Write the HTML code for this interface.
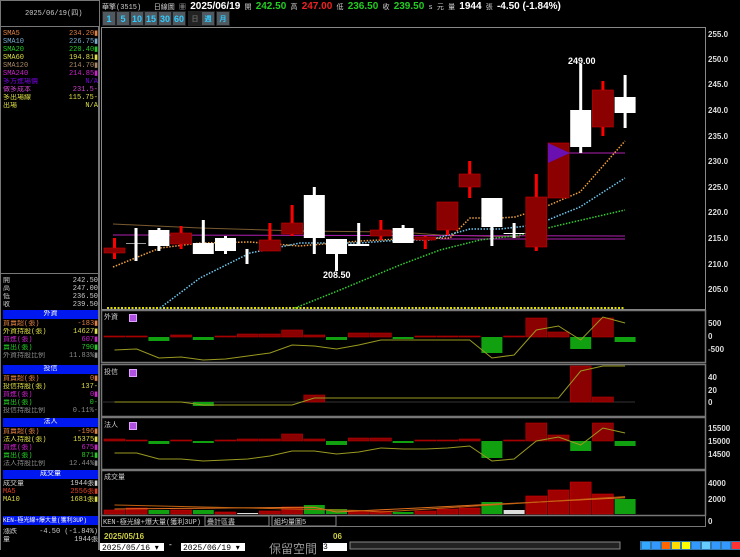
<!DOCTYPE html>
<html><head><meta charset="utf-8"><style>
*{margin:0;padding:0;box-sizing:border-box}
body{width:740px;height:550px;background:#000;overflow:hidden;position:relative;font-family:"Liberation Mono","Noto Sans CJK TC",monospace;font-size:8px;color:#ccc}
.a{position:absolute;white-space:nowrap}
.row{position:absolute;left:3px;width:95px;height:8px;line-height:8px;font-size:7px;overflow:hidden}
.row span{position:absolute;right:0}
.hd{position:absolute;left:3px;width:95px;height:9px;background:#0018f0;color:#fff;text-align:center;font-size:7px;line-height:9px;overflow:hidden}
.btn{position:absolute;top:11px;height:15px;width:14px;background:#505860;color:#3cf;font:bold 9px "Liberation Sans",sans-serif;text-align:center;line-height:15px;border:1px solid #222}
.ax{position:absolute;left:708px;color:#ddd;font:bold 8px "Liberation Sans",sans-serif}
.ic{position:absolute;left:129px;width:8px;height:8px;background:#b050e0;border:1px solid #e0a0ff}
</style></head><body>
<div class="a" style="left:0;top:0;width:100px;height:27px;border:1px solid #777"></div>
<div class="a" style="left:25px;top:8px;color:#ccc;font-size:7px">2025/06/19(四)</div>
<div class="a" style="left:0;top:27px;width:100px;height:523px;border-left:1px solid #777;border-right:2px solid #777"></div>
<div class="row" style="top:30px;color:#e08040">SMA5<span>234.20▮</span></div>
<div class="row" style="top:38px;color:#7ac">SMA10<span>226.75▮</span></div>
<div class="row" style="top:46px;color:#2c2">SMA20<span>220.40▮</span></div>
<div class="row" style="top:54px;color:#dd4">SMA60<span>194.81▮</span></div>
<div class="row" style="top:62px;color:#a86">SMA120<span>214.70▮</span></div>
<div class="row" style="top:70px;color:#c2c">SMA240<span>214.85▮</span></div>
<div class="row" style="top:78px;color:#70d">多方進場價<span>N/A</span></div>
<div class="row" style="top:86px;color:#c4c">做多成本<span>231.5-</span></div>
<div class="row" style="top:94px;color:#dd4">多出場線<span>115.75-</span></div>
<div class="row" style="top:102px;color:#dd4">出場<span>N/A</span></div>
<div class="a" style="left:1px;top:273px;width:98px;height:1px;background:#777"></div>
<div class="row" style="top:277px">開<span>242.50</span></div>
<div class="row" style="top:285px">高<span>247.00</span></div>
<div class="row" style="top:293px">低<span>236.50</span></div>
<div class="row" style="top:301px">收<span>239.50</span></div>
<div class="hd" style="top:310px">外資</div>
<div class="row" style="top:320px;color:#e08040">買賣超(張)<span>-183▮</span></div>
<div class="row" style="top:328px;color:#dd4">外資持股(張)<span>14627▮</span></div>
<div class="row" style="top:336px;color:#c2c">買進(張)<span>607▮</span></div>
<div class="row" style="top:344px;color:#2c2">賣出(張)<span>790▮</span></div>
<div class="row" style="top:352px;color:#888">外資持股比例<span>11.83%▮</span></div>
<div class="hd" style="top:365px">投信</div>
<div class="row" style="top:375px;color:#e08040">買賣超(張)<span>0▮</span></div>
<div class="row" style="top:383px;color:#dd4">投信持股(張)<span>137-</span></div>
<div class="row" style="top:391px;color:#c2c">買進(張)<span>0▮</span></div>
<div class="row" style="top:399px;color:#2c2">賣出(張)<span>0-</span></div>
<div class="row" style="top:407px;color:#888">投信持股比例<span>0.11%-</span></div>
<div class="hd" style="top:418px">法人</div>
<div class="row" style="top:428px;color:#e08040">買賣超(張)<span>-196▮</span></div>
<div class="row" style="top:436px;color:#dd4">法人持股(張)<span>15375▮</span></div>
<div class="row" style="top:444px;color:#c2c">買進(張)<span>675▮</span></div>
<div class="row" style="top:452px;color:#2c2">賣出(張)<span>871▮</span></div>
<div class="row" style="top:460px;color:#888">法人持股比例<span>12.44%▮</span></div>
<div class="hd" style="top:470px">成交量</div>
<div class="row" style="top:480px;color:#ccc">成交量<span>1944張▮</span></div>
<div class="row" style="top:488px;color:#e04020">MA5<span>2556張▮</span></div>
<div class="row" style="top:496px;color:#dd4">MA10<span>1681張▮</span></div>
<div class="hd" style="top:516px;text-align:left;font-size:6px">KEN-極光線+爆大量(獲利3UP)</div>
<div class="row" style="top:528px">漲跌<span>-4.50 (-1.84%)</span></div>
<div class="row" style="top:536px">量<span>1944張</span></div>

<div class="a" style="left:102px;top:1px;font-size:7px;color:#ccc">華擎(3515) &nbsp; 日線圖 ▦ <b style="font:bold 10px 'Liberation Sans';color:#fff">2025/06/19</b> 開 <b style="font:bold 10px 'Liberation Sans';color:#2c2">242.50</b> 高 <b style="font:bold 10px 'Liberation Sans';color:#e22">247.00</b> 低 <b style="font:bold 10px 'Liberation Sans';color:#2c2">236.50</b> 收 <b style="font:bold 10px 'Liberation Sans';color:#2c2">239.50</b> s 元 量 <b style="font:bold 10px 'Liberation Sans';color:#fff">1944</b> 張 <b style="font:bold 10px 'Liberation Sans';color:#fff">-4.50 (-1.84%)</b></div>
<div class="btn" style="left:102px">1</div><div class="btn" style="left:116px">5</div><div class="btn" style="left:130px">10</div><div class="btn" style="left:144px">15</div><div class="btn" style="left:158px">30</div><div class="btn" style="left:172px">60</div><div class="btn" style="left:188px;background:#222;color:#666;font-size:7px">日</div><div class="btn" style="left:201px;font-size:7px">週</div><div class="btn" style="left:216px;font-size:7px">月</div>

<svg class="a" style="left:0;top:0" width="740" height="550" id="s"></svg>

<div class="ax" style="top:30px">255.0</div><div class="ax" style="top:55px">250.0</div><div class="ax" style="top:80px">245.0</div><div class="ax" style="top:106px">240.0</div><div class="ax" style="top:132px">235.0</div><div class="ax" style="top:157px">230.0</div><div class="ax" style="top:183px">225.0</div><div class="ax" style="top:208px">220.0</div><div class="ax" style="top:234px">215.0</div><div class="ax" style="top:260px">210.0</div><div class="ax" style="top:285px">205.0</div>
<div class="ax" style="top:319px">500</div><div class="ax" style="top:332px">0</div><div class="ax" style="top:345px">-500</div>
<div class="ax" style="top:373px">40</div><div class="ax" style="top:386px">20</div><div class="ax" style="top:398px">0</div>
<div class="ax" style="top:424px">15500</div><div class="ax" style="top:437px">15000</div><div class="ax" style="top:450px">14500</div>
<div class="ax" style="top:479px">4000</div><div class="ax" style="top:495px">2000</div><div class="ax" style="top:517px">0</div>
<div class="a" style="left:568px;top:56px;color:#fff;font:bold 9px 'Liberation Sans'">249.00</div>
<div class="a" style="left:323px;top:270px;color:#fff;font:bold 9px 'Liberation Sans'">208.50</div>
<div class="a" style="left:104px;top:312px;font-size:7px">外資</div>
<div class="a" style="left:104px;top:367px;font-size:7px">投信</div>
<div class="a" style="left:104px;top:420px;font-size:7px">法人</div>
<div class="a" style="left:104px;top:472px;font-size:7px">成交量</div>
<div class="ic" style="top:314px"></div><div class="ic" style="top:369px"></div><div class="ic" style="top:422px"></div>
<div class="a" style="left:103px;top:517px;font-size:7px">KEN-極光線+爆大量(獲利3UP)</div>
<div class="a" style="left:207px;top:517px;font-size:7px">疊計區盡</div>
<div class="a" style="left:274px;top:517px;font-size:7px">組均量圖5</div>
<div class="a" style="left:104px;top:532px;color:#cc4;font:bold 8px 'Liberation Sans'">2025/05/16</div>
<div class="a" style="left:333px;top:532px;color:#cc4;font:bold 8px 'Liberation Sans'">06</div>
<div class="a" style="left:100px;top:543px;width:64px;height:8px;background:#fff;color:#000;font-size:8px;padding-left:2px">2025/05/16 ▾</div>
<div class="a" style="left:168px;top:541px;color:#fff">-</div>
<div class="a" style="left:181px;top:543px;width:64px;height:8px;background:#fff;color:#000;font-size:8px;padding-left:2px">2025/06/19 ▾</div>
<div class="a" style="left:269px;top:540px;color:#999;font-size:12px">保留空間</div>
<div class="a" style="left:323px;top:543px;width:24px;height:8px;background:#fff;color:#000">3</div>
<script>
var s=document.getElementById('s'),h='';
function R(x,y,w,hh,f,st){h+='<rect x="'+x+'" y="'+y+'" width="'+w+'" height="'+hh+'" fill="'+f+'"'+(st?' stroke="'+st+'" stroke-width="0.6"':'')+'/>';}
function L(p,c,w,d){h+='<polyline points="'+p+'" fill="none" stroke="'+c+'" stroke-width="'+(w||1)+'"'+(d?' stroke-dasharray="'+d+'"':'')+'/>';}
h+='<rect x="101.5" y="27.5" width="604" height="282" fill="none" stroke="#888"/>';
[[310,362],[364,416],[417,469],[470,515]].forEach(function(a){h+='<rect x="101.5" y="'+a[0]+'.5" width="604" height="'+(a[1]-a[0])+'" fill="none" stroke="#777" stroke-width="1.5"/>';});
h+='<rect x="101.5" y="515.5" width="604" height="11" fill="none" stroke="#777"/>';
h+='<rect x="205" y="516" width="64" height="10" fill="none" stroke="#888"/><rect x="272" y="516" width="64" height="10" fill="none" stroke="#888"/>';
h+='<rect x="100" y="540" width="640" height="10" fill="#000"/><rect x="640" y="541" width="100" height="9" fill="#37a"/><rect x="350" y="542" width="270" height="7" fill="#222" stroke="#888"/>';
for(var i=0;i<10;i++)R(642+i*10,542,8,7,['#3af','#39f','#f60','#fd0','#ff0','#39f','#6cf','#39f','#39f','#f33'][i]);
var cx=function(i){return 114.5+22.2*i;};
var C=[[0,248,253,238,259,'r'],[2,230,246,228,251,'w'],[3,233,244,226,249,'r'],[4,243,254,220,254,'w'],[5,238,251,236,254,'w'],[7,240,251,223,251,'r'],[8,223,234,205,236,'r'],[9,195,238,187,254,'w'],[10,239,254,239,271,'w'],[11,244,246,223,246,'w'],[12,230,236,220,240,'r'],[13,228,243,225,243,'w'],[14,237,240,236,249,'r'],[15,202,230,202,235,'r'],[16,174,187,161,198,'r'],[17,198,227,198,246,'w'],[18,233,234,223,238,'w'],[19,197,247,174,251,'r'],[20,143,198,143,198,'r'],[21,110,147,64,153,'w'],[22,90,127,81,136,'r'],[23,97,113,75,128,'w']];
L('113,224 200,228 300,231 400,232 440,235 520,237','#7a5a30',1);
L('113,235 625,236','#b020b0',1);L('440,239 625,239','#b020b0',1);
L('548,153 625,153','#b020b0',1);
L('107,308 625,308','#dd0',2,'2,1.5');
L('113,267 160,248 200,243 250,242 300,246 360,241 400,239 450,238 470,218 500,218 515,217 540,209 580,192 625,141','#f0a040',1.5,'1.5,1.5');
L('160,308 200,278 250,253 300,243 360,243 400,240 430,240 470,229 500,229 536,225 560,215 580,207 625,178','#70c8f0',1.5,'1.5,1.5');
L('295,308 340,290 400,265 440,250 480,240 520,235 560,225 625,210','#30d030',1.5,'1.5,1.5');
R(126,243,20,1,'#999');h+='<line x1="136" y1="228" x2="136" y2="261" stroke="#fff" stroke-width="3"/>';
h+='<line x1="247" y1="249" x2="247" y2="264" stroke="#fff" stroke-width="3"/>';
C.forEach(function(c){var x=cx(c[0]);var w=c[5]=='r';h+='<line x1="'+x+'" y1="'+c[3]+'" x2="'+x+'" y2="'+c[4]+'" stroke="'+(w?'#f00':'#fff')+'" stroke-width="3"/>';R(x-10.5,c[1],21,Math.max(1,c[2]-c[1]),w?'#8b0000':'#fff',w?'#c00':null);});
h+='<polygon points="548,143 570,153 548,163" fill="#6a10b0"/>';
function panel(z,bars,line,lc){bars.forEach(function(b,i){if(b===null)return;var x=cx(i)-10.5;if(b<0)R(x,z,21,Math.max(1,-b),'#10a010');else R(x,z-Math.max(1,b),21,Math.max(1,b),'#8b0000','#b00');});var p=line.map(function(v,i){return cx(i)+','+v;}).join(' ');L(p,lc||'#9a9a20',1);}
panel(337,[1,1,-4,2,-3,1,3,3,7,2,-3,4,4,-2,1,1,1,-16,0,19,5,-12,19,-5],[350,349,358,357,360,359,356,353,345,346,349,345,340,340,340,340,340,358,355,330,326,340,317,323]);
h+='<line x1="103" y1="402" x2="635" y2="402" stroke="#333"/>';
panel(402,[null,null,null,null,-4,null,null,null,null,7,null,null,null,null,null,null,null,null,null,null,null,36,5,null],[402,402,402,402,405,405,405,405,405,398,398,398,398,398,398,398,398,398,398,398,398,371,366,366]);
panel(441,[2,1,-3,1,-2,1,2,2,7,2,-4,3,3,-2,1,1,2,-17,0,18,6,-10,18,-5],[453,453,459,459,461,460,459,456,451,451,454,452,448,449,449,448,446,461,459,441,437,445,428,433]);
var V=[4,6,4,4,4,2,1,3,7,9,5,3,3,2,3,5,6,12,4,18,24,32,20,15];
V.forEach(function(v,i){var x=cx(i)-10.5;var g=(i==2||i==4||i==10||i==13||i==17||i==23||i==9);var wt=(i==6||i==18);R(x,514-v,21,v,wt?'#ddd':(g?'#10a010':'#a00000'),g||wt?null:'#c00');});
L(V.map(function(v,i){return cx(i)+','+(i<10?509-i*0.2:512-(i-10)*1.1);}).join(' '),'#e07020',1);
L(V.map(function(v,i){return cx(i)+','+(i<12?505+i*0.5:512-(i-12)*1.4);}).join(' '),'#c06010',1);
s.innerHTML=h;
</script>
</body></html>
